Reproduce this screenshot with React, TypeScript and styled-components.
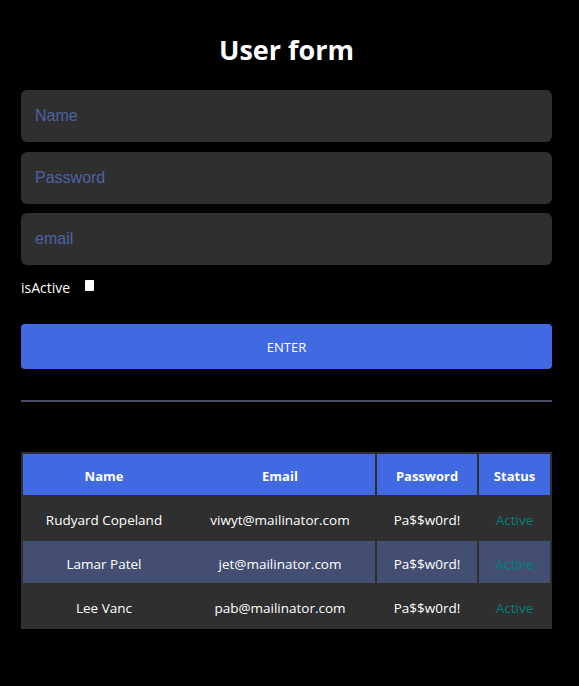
import { createGlobalStyle, styled } from "styled-components";

type User = {
  name: string;
  email: string;
  password: string;
  active: boolean;
};

const users: User[] = [
  { name: "Rudyard Copeland", email: "viwyt@mailinator.com", password: "Pa$$w0rd!", active: true },
  { name: "Lamar Patel", email: "jet@mailinator.com", password: "Pa$$w0rd!", active: true },
  { name: "Lee Vanc", email: "pab@mailinator.com", password: "Pa$$w0rd!", active: true },
];

const App = () => {
  return (
    <>
      <GlobalStyle />
      <Page>
        <Title>User form</Title>
        <Form onSubmit={(e) => e.preventDefault()}>
          <Field placeholder="Name" />
          <Field placeholder="Password" type="password" />
          <Field placeholder="email" />
          <CheckRow>
            <span>isActive</span>
            <Check type="checkbox" />
          </CheckRow>
          <EnterBTN type="submit">Enter</EnterBTN>
        </Form>
        <Divider />
        <Table>
          <Row $variant="head">
            <HeadCell>Name</HeadCell>
            <HeadCell>Email</HeadCell>
            <HeadCell $sep>Password</HeadCell>
            <HeadCell $sep>Status</HeadCell>
          </Row>
          {users.map((u, i) => (
            <Row key={u.email} $variant={i % 2 === 1 ? "alt" : "plain"}>
              <Cell>{u.name}</Cell>
              <Cell>{u.email}</Cell>
              <Cell $sep>{u.password}</Cell>
              <Cell $sep $status>{u.active ? "Active" : "Inactive"}</Cell>
            </Row>
          ))}
        </Table>
      </Page>
    </>
  );
};

const GlobalStyle = createGlobalStyle`
  * { box-sizing: border-box; }
  html, body {
    margin: 0;
    padding: 0;
    background: #000;
    min-height: 100%;
  }
  body {
    font-family: "Open Sans", "Noto Sans", sans-serif;
    color: #fff;
  }
`;

const Page = styled.main`
  width: 531px;
  margin-left: 21px;
  padding-top: 30px;
  padding-bottom: 40px;
`;

const Title = styled.h1`
  margin: 0 0 20px;
  height: 40px;
  line-height: 40px;
  text-align: center;
  font-size: 27px;
  font-weight: 700;
`;

const Form = styled.form`
  display: flex;
  flex-direction: column;
  gap: 9.5px;
`;

const Field = styled.input`
  width: 100%;
  height: 52px;
  border: none;
  border-radius: 6px;
  background: #2f2f2f;
  padding: 0 14px;
  font-family: "Liberation Sans", Arial, sans-serif;
  font-size: 16px;
  color: #fff;
  outline: none;

  &::placeholder {
    color: #4d62a3;
  }
`;

const CheckRow = styled.label`
  display: flex;
  align-items: center;
  gap: 15px;
  margin-top: 1px;
  height: 24px;
  font-size: 14px;
`;

const Check = styled.input`
  appearance: none;
  margin: 0 0 4px;
  width: 9px;
  height: 11px;
  background: #fff;
  border: none;
  border-radius: 1px;
`;

const EnterBTN = styled.button`
  margin-top: 15px;
  height: 45px;
  border: none;
  border-radius: 4px;
  background: #4169e1;
  color: #fff;
  font-family: "Open Sans", "Noto Sans", sans-serif;
  font-size: 13px;
  text-transform: uppercase;
  cursor: pointer;
`;

const Divider = styled.hr`
  margin: 31px 0 50px;
  border: none;
  height: 2px;
  background: #474c63;
`;

const Table = styled.div`
  display: grid;
  row-gap: 2px;
  padding: 2px;
  background: #2f2f2f;
`;

const rowBg = {
  head: "#4169e1",
  alt: "#434f72",
  plain: "transparent",
};

const Row = styled.div<{ $variant: "head" | "alt" | "plain" }>`
  display: grid;
  grid-template-columns: 162px 190px 102px 73px;
  height: ${(p) => (p.$variant === "head" ? "41px" : "42px")};
  background: ${(p) => rowBg[p.$variant]};
`;

const Cell = styled.div<{ $sep?: boolean; $status?: boolean }>`
  display: flex;
  align-items: center;
  justify-content: center;
  padding-top: 3px;
  font-size: 13.5px;
  white-space: nowrap;
  color: ${(p) => (p.$status ? "#008080" : "#fff")};
  border-left: ${(p) => (p.$sep ? "2px solid #2f2f2f" : "none")};
`;

const HeadCell = styled(Cell)`
  padding-top: 2px;
  font-weight: 700;
  font-size: 13px;
`;

export default App;
